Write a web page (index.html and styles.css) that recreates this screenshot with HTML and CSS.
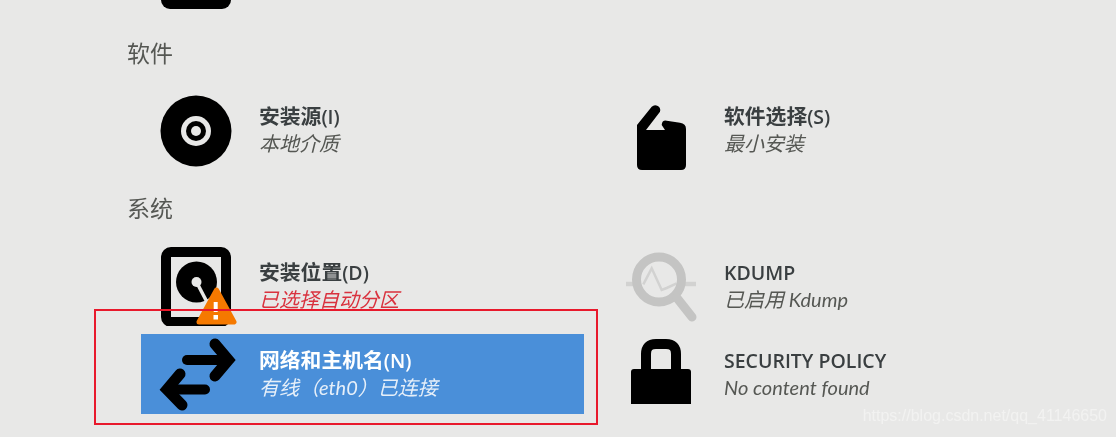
FILE: index.html
```html
<!DOCTYPE html>
<html>
<head>
    <title>安装信息摘要</title>
    <link rel="stylesheet" href="styles.css">
</head>
<body>
    <div class="clipped-icon"></div>

    <h2 class="section-title">软件</h2>
    <div class="spoke-grid">
        <div class="spoke">
            <svg class="spoke-icon" viewBox="0 0 80 80">
                <circle cx="40" cy="41" r="35.5" fill="#000"/>
                <circle cx="40" cy="41" r="15" fill="#e8e8e7"/>
                <circle cx="40" cy="41" r="10" fill="#000"/>
                <circle cx="40" cy="41" r="5" fill="#e8e8e7"/>
            </svg>
            <div class="spoke-text">
                <div class="spoke-name">安装源<span class="latin">(I)</span></div>
                <div class="spoke-status">本地介质</div>
            </div>
        </div>
        <div class="spoke">
            <svg class="spoke-icon" viewBox="0 0 80 80">
                <path d="M16 35 L30.700 16.700 A5 5 0 0 1 39 21.700 L25 40 L44 40 L40.700 35 Q41 30 45.700 30.700 L59 32.700 Q65 33.500 65 39 L65 75 Q65 80 60 80 L21 80 Q16 80 16 75 Z" fill="#000"/>
            </svg>
            <div class="spoke-text">
                <div class="spoke-name">软件选择<span class="latin">(S)</span></div>
                <div class="spoke-status">最小安装</div>
            </div>
        </div>
    </div>

    <h2 class="section-title">系统</h2>
    <div class="spoke-grid">
        <div class="spoke">
            <svg class="spoke-icon" viewBox="0 0 80 80">
                <rect x="10" y="6" width="60" height="70" rx="5" fill="none" stroke="#000" stroke-width="10"/>
                <circle cx="40.500" cy="36" r="20.500" fill="#000"/>
                <path d="M40.500 36 L52 58" stroke="#e8e8e7" stroke-width="3.500"/>
                <circle cx="40.500" cy="36" r="5" fill="#e8e8e7"/>
            </svg>
            <svg class="warning-badge" viewBox="0 0 41 39">
                <path d="M20.500 3 L38 35 L3 35 Z" fill="#f57900" stroke="#f57900" stroke-width="5" stroke-linejoin="round"/>
                <path d="M19.700 15 L19.700 25" stroke="#fff" stroke-width="4"/>
                <rect x="17.500" y="28" width="4.500" height="4.500" fill="#fff"/>
            </svg>
            <div class="spoke-text">
                <div class="spoke-name">安装位置<span class="latin">(D)</span></div>
                <div class="spoke-status status-error">已选择自动分区</div>
            </div>
        </div>
        <div class="spoke">
            <svg class="spoke-icon" viewBox="0 0 80 80">
                <path d="M5 38 L15 38 M61 38 L75 38" stroke="#d2d2d1" stroke-width="4.500"/>
                <path d="M22.300 38.300 L30.700 22.300 L40.700 44 L45.700 42 L55.700 37.300" fill="none" stroke="#d2d2d1" stroke-width="2.500"/>
                <circle cx="38" cy="33.500" r="22.500" fill="none" stroke="#c4c4c3" stroke-width="9"/>
                <path d="M56 52 L71 71" stroke="#c4c4c3" stroke-width="9" stroke-linecap="round"/>
            </svg>
            <div class="spoke-text">
                <div class="spoke-name name-latin">KDUMP</div>
                <div class="spoke-status">已启用 Kdump</div>
            </div>
        </div>
        <div class="spoke spoke-selected">
            <svg class="spoke-icon" viewBox="0 0 80 80">
                <path d="M31 26 L66 26" stroke="#000" stroke-width="10" stroke-linecap="round"/>
                <path d="M59 10 L72.500 26 L59 42" fill="none" stroke="#000" stroke-width="11" stroke-linecap="round"/>
                <path d="M49 55.500 L14 55.500" stroke="#000" stroke-width="10" stroke-linecap="round"/>
                <path d="M24 40 L11 55.500 L26 71" fill="none" stroke="#000" stroke-width="11" stroke-linecap="round"/>
            </svg>
            <div class="spoke-text">
                <div class="spoke-name">网络和主机名<span class="latin">(N)</span></div>
                <div class="spoke-status">有线（eth0）已连接</div>
            </div>
        </div>
        <div class="spoke">
            <svg class="spoke-icon" viewBox="0 0 80 80">
                <path d="M25 36 L25 20 Q25 10 35 10 L45 10 Q55 10 55 20 L55 36" fill="none" stroke="#000" stroke-width="10"/>
                <path d="M10 38 Q10 35 13 35 L67 35 Q70 35 70 38 L70 70 L10 70 Z" fill="#000"/>
            </svg>
            <div class="spoke-text">
                <div class="spoke-name name-latin">SECURITY POLICY</div>
                <div class="spoke-status">No content found</div>
            </div>
        </div>
    </div>

    <div class="red-box"></div>
    <div class="watermark">https://blog.csdn.net/qq_41146650</div>
</body>
</html>
```

FILE: styles.css
```css
* {
    margin: 0;
    padding: 0;
    box-sizing: border-box;
}

html, body {
    height: 437px;
    overflow: hidden;
}

body {
    position: relative;
    background-color: #e8e8e7;
    color: #2e3436;
    font-family: Lato, "Noto Sans CJK SC", sans-serif;
    filter: blur(0.4px);
}

.clipped-icon {
    width: 70px;
    height: 9px;
    margin-left: 161px;
    background-color: #000;
    border-radius: 0 0 10px 10px;
}

.section-title {
    height: 26px;
    margin: 31px 0 24px 127px;
    font-size: 23px;
    line-height: 26px;
    font-weight: normal;
    color: #555753;
}

.spoke-grid + .section-title {
    margin-top: 25px;
    margin-bottom: 25px;
}

.spoke-grid {
    display: grid;
    grid-template-columns: 443px 443px;
    grid-auto-rows: 80px;
    column-gap: 22px;
    row-gap: 8px;
    margin-left: 141px;
}

.spoke {
    position: relative;
    display: flex;
    align-items: center;
    padding-left: 15px;
}

.spoke-selected {
    background-color: #4a8fd9;
    color: #fff;
}

.spoke-icon {
    flex: none;
    width: 80px;
    height: 80px;
}

.spoke-text {
    margin-left: 23px;
}

.spoke-name {
    font-family: "Open Sans", "Noto Sans CJK SC", sans-serif;
    font-size: 20.8px;
    line-height: 26px;
    font-weight: 600;
    color: #3a3f41;
}

.spoke-name .latin,
.name-latin {
    font-size: 19.5px;
}

.spoke-selected .spoke-name {
    color: #fff;
}

.spoke-status {
    font-size: 20px;
    line-height: 27px;
    font-style: italic;
    color: #555753;
}

.spoke-selected .spoke-status {
    color: #e6eff9;
}

.spoke .status-error {
    color: #d9323e;
}

.warning-badge {
    position: absolute;
    left: 55px;
    top: 41px;
    width: 41px;
    height: 39px;
}

.red-box {
    position: absolute;
    left: 94px;
    top: 309px;
    width: 504px;
    height: 116px;
    border: 2px solid #e8192c;
}

.watermark {
    position: absolute;
    right: 9px;
    top: 407px;
    font-family: "Liberation Sans", sans-serif;
    font-size: 16px;
    color: #f2f2f1;
}
```
